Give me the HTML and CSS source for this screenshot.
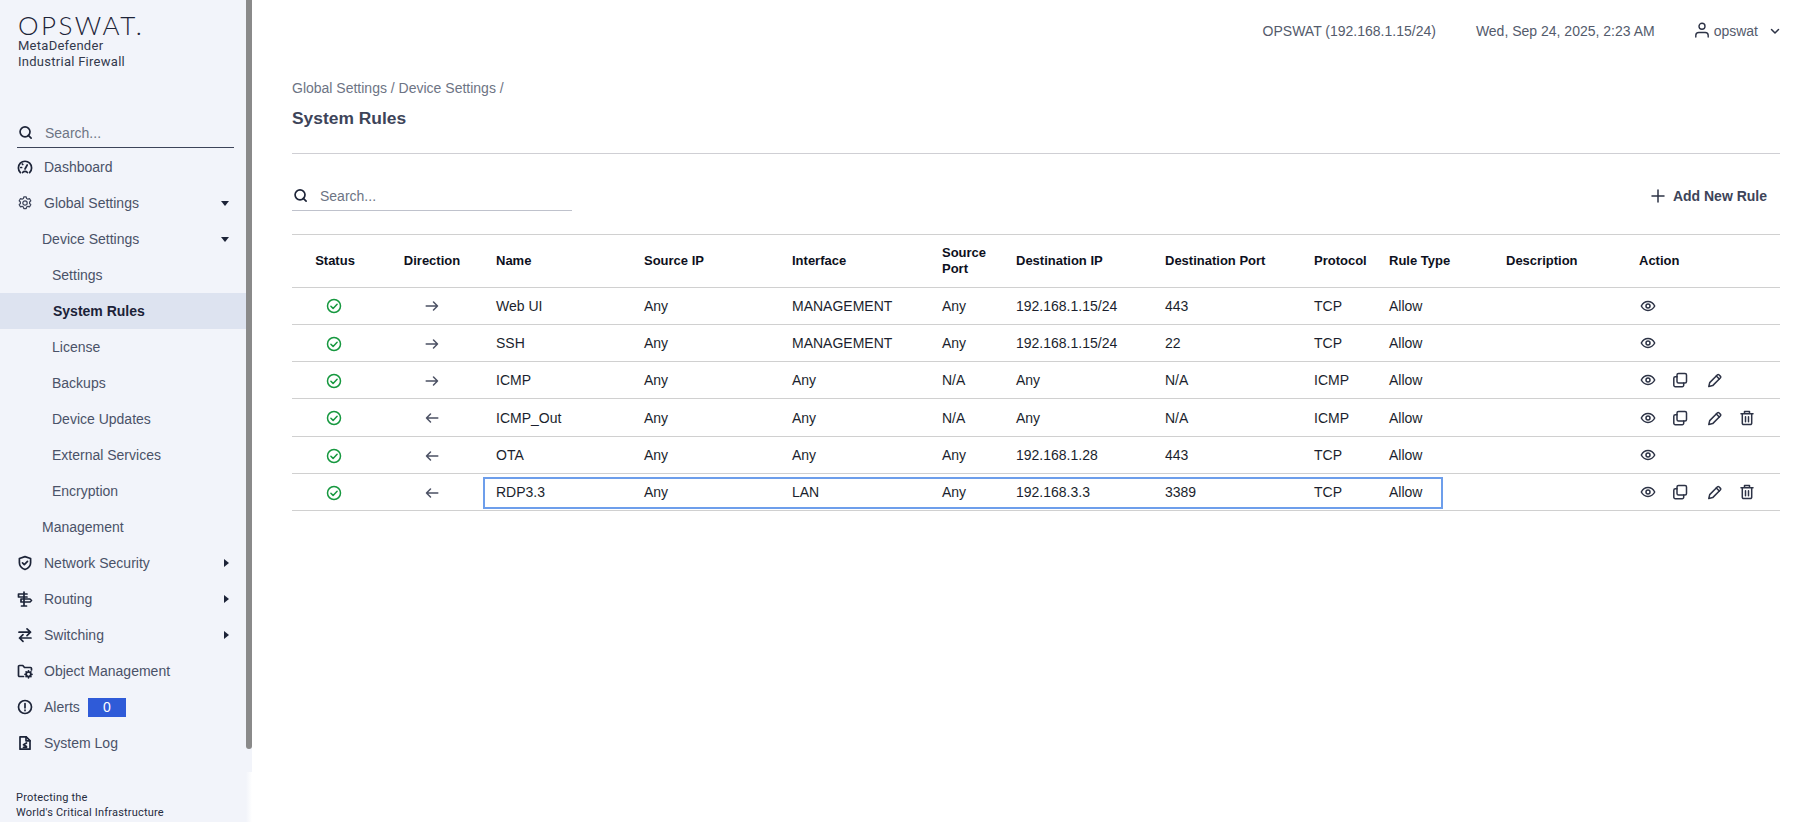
FILE: index.html
```html
<!DOCTYPE html>
<html lang="en">
<head>
<meta charset="utf-8">
<title>System Rules</title>
<link rel="stylesheet" href="styles.css">
</head>
<body>
<svg class="sprite" aria-hidden="true">
  <symbol id="i-search" viewBox="0 0 16 16"><circle cx="7.5" cy="7.3" r="5.3"/><path d="M11 11l3 3"/></symbol>
  <symbol id="i-gauge" viewBox="0 0 16 16"><path d="M3.4 13.600A6.600 6.600 0 1 1 12.600 13.600"/><path d="M5.600 13.500a3.200 3.200 0 0 1 4.800 0"/><path d="M8 10l2.200-4"/><path d="M3.800 8.500h.8M5.300 5l.5.5"/></symbol>
  <symbol id="i-gear" viewBox="0 0 16 16"><path d="M6.800 1.800h2.400l.4 1.700 1.300.7 1.700-.5 1.200 2.100-1.200 1.200v1.500l1.200 1.200-1.200 2.100-1.700-.5-1.300.7-.4 1.700H6.800l-.4-1.700-1.300-.7-1.700.5-1.200-2.100 1.200-1.200V7l-1.200-1.200 1.200-2.100 1.700.5 1.300-.7z"/><circle cx="8" cy="8" r="2.200"/></symbol>
  <symbol id="i-shield" viewBox="0 0 16 16"><path d="M8 1.600l5.600 1.900v4.200c0 3.200-2.300 5.500-5.600 6.800-3.300-1.300-5.600-3.600-5.600-6.800V3.500z"/><path d="M5.500 7.800l1.800 1.800 3.200-3.300"/></symbol>
  <symbol id="i-sign" viewBox="0 0 16 16"><path d="M7 1v14M4.500 15h5"/><path d="M1.500 3h8.500M1.500 6h8.500M1.500 3v3"/><path d="M4 8h9l1.500 1.500L13 11H4z"/></symbol>
  <symbol id="i-swap" viewBox="0 0 16 16"><path d="M2 5.200h11.500M10 1.800l3.500 3.400-3.500 3.400"/><path d="M14 11H2.500M6 7.600L2.500 11 6 14.400"/></symbol>
  <symbol id="i-folder" viewBox="0 0 16 16"><path d="M6.500 13.500h-4a1 1 0 0 1-1-1v-9a1 1 0 0 1 1-1h3.300l1.700 2h6a1 1 0 0 1 1 1v1.500"/><circle cx="11.500" cy="11.300" r="2.300"/><path d="M11.500 7.800v1M11.500 13.800v1M8 11.300h1M14 11.300h1M9.100 8.900l.6.6M13.300 13.100l.6.6M9.100 13.700l.6-.6M13.300 9.500l.6-.6"/></symbol>
  <symbol id="i-alert" viewBox="0 0 16 16"><circle cx="8" cy="8" r="6.500"/><path d="M8 4.500v4.300M8 11v.6"/></symbol>
  <symbol id="i-doc" viewBox="0 0 16 16"><path d="M3 1.800h6.200L13 5.600v8.600H3z"/><path d="M9 1.800v4h4"/><path d="M9.500 8L6.500 9.800l3 1.800M6.500 12.400h3"/></symbol>
  <symbol id="i-user" viewBox="0 0 16 16"><circle cx="8" cy="4.300" r="3"/><path d="M1.800 15v-1.500a3 3 0 0 1 3-3h6.400a3 3 0 0 1 3 3V15"/></symbol>
  <symbol id="i-chev" viewBox="0 0 12 12"><path d="M2.500 4.500L6 8l3.500-3.500"/></symbol>
  <symbol id="i-plus" viewBox="0 0 16 16"><path d="M8 2v12M2 8h12"/></symbol>
  <symbol id="i-check" viewBox="0 0 16 16"><circle cx="8" cy="8" r="6.500"/><path d="M4.900 8.200l2.200 2.200 4-4.200"/></symbol>
  <symbol id="i-right" viewBox="0 0 16 16"><path d="M2.200 8h11.300M9.500 4l4 4-4 4"/></symbol>
  <symbol id="i-left" viewBox="0 0 16 16"><path d="M13.800 8H2.500M6.500 4l-4 4 4 4"/></symbol>
  <symbol id="i-eye" viewBox="0 0 16 16"><path d="M1.300 8C2.800 5.100 5.200 3.600 8 3.600s5.200 1.500 6.700 4.400c-1.500 2.900-3.900 4.400-6.700 4.400S2.800 10.900 1.300 8z"/><circle cx="8" cy="8" r="2"/></symbol>
  <symbol id="i-copy" viewBox="0 0 16 16"><rect x="5" y="1.500" width="9.500" height="9.500" rx="1.500"/><path d="M5 4.800H3.300a1.500 1.500 0 0 0-1.500 1.500v6.900a1.500 1.500 0 0 0 1.500 1.500h6.900a1.500 1.500 0 0 0 1.500-1.500V11"/></symbol>
  <symbol id="i-pencil" viewBox="0 0 16 16"><path d="M1.800 14.500l.9-3.900 7.800-7.800a1 1 0 0 1 1.400 0l1.600 1.600a1 1 0 0 1 0 1.400l-7.800 7.800z"/><path d="M9.300 4l3 3"/></symbol>
  <symbol id="i-trash" viewBox="0 0 16 16"><path d="M2 3.800h12M5.500 3.800V1.600h5v2.200M3.300 3.800v9.400a1.300 1.300 0 0 0 1.300 1.300h6.800a1.300 1.300 0 0 0 1.300-1.300V3.800M6.500 6.800v5M9.500 6.800v5"/></symbol>
</svg>

<div class="app">
  <aside class="sidebar">
    <div class="brand">
      <div class="logo">OPSWAT.</div>
      <div class="product">MetaDefender<br>Industrial Firewall</div>
    </div>
    <label class="side-search">
      <svg class="ic ic-search"><use href="#i-search"/></svg>
      <input type="text" placeholder="Search...">
    </label>
    <nav class="nav">
      <a class="item"><svg class="ic"><use href="#i-gauge"/></svg><span>Dashboard</span></a>
      <a class="item"><svg class="ic ic-sm"><use href="#i-gear"/></svg><span>Global Settings</span><i class="caret down"></i></a>
      <a class="item sub"><span>Device Settings</span><i class="caret down"></i></a>
      <a class="item leaf"><span>Settings</span></a>
      <a class="item leaf active"><span>System Rules</span></a>
      <a class="item leaf"><span>License</span></a>
      <a class="item leaf"><span>Backups</span></a>
      <a class="item leaf"><span>Device Updates</span></a>
      <a class="item leaf"><span>External Services</span></a>
      <a class="item leaf"><span>Encryption</span></a>
      <a class="item sub"><span>Management</span></a>
      <a class="item"><svg class="ic"><use href="#i-shield"/></svg><span>Network Security</span><i class="caret right"></i></a>
      <a class="item"><svg class="ic"><use href="#i-sign"/></svg><span>Routing</span><i class="caret right"></i></a>
      <a class="item"><svg class="ic"><use href="#i-swap"/></svg><span>Switching</span><i class="caret right"></i></a>
      <a class="item"><svg class="ic"><use href="#i-folder"/></svg><span>Object Management</span></a>
      <a class="item"><svg class="ic"><use href="#i-alert"/></svg><span>Alerts</span><b class="badge">0</b></a>
      <a class="item"><svg class="ic"><use href="#i-doc"/></svg><span>System Log</span></a>
    </nav>
    <div class="tagline">Protecting the<br>World's Critical Infrastructure</div>
    <div class="thumb"></div>
    <div class="rail-fade"></div>
  </aside>

  <main class="main">
    <header class="topbar">
      <span class="host">OPSWAT (192.168.1.15/24)</span>
      <span class="date">Wed, Sep 24, 2025, 2:23 AM</span>
      <span class="user"><svg class="ic-user"><use href="#i-user"/></svg>opswat</span>
      <svg class="ic-chev"><use href="#i-chev"/></svg>
    </header>

    <div class="crumbs">Global Settings / Device Settings /</div>
    <h1 class="title">System Rules</h1>

    <div class="toolbar">
      <label class="search">
        <svg class="ic ic-search"><use href="#i-search"/></svg>
        <input type="text" placeholder="Search...">
      </label>
      <button class="add" type="button"><svg class="ic-plus"><use href="#i-plus"/></svg>Add New Rule</button>
    </div>

    <table class="rules">
      <colgroup>
        <col class="c-status"><col class="c-dir"><col class="c-name"><col class="c-sip"><col class="c-if"><col class="c-sport"><col class="c-dip"><col class="c-dport"><col class="c-proto"><col class="c-type"><col class="c-desc"><col class="c-act">
      </colgroup>
      <thead>
        <tr><th class="ctr">Status</th><th class="ctr dirh">Direction</th><th>Name</th><th>Source IP</th><th>Interface</th><th>Source Port</th><th>Destination IP</th><th>Destination Port</th><th>Protocol</th><th>Rule Type</th><th>Description</th><th>Action</th></tr>
      </thead>
      <tbody>
        <tr>
          <td class="ctr"><svg class="st"><use href="#i-check"/></svg></td><td class="ctr dirh"><svg class="dir"><use href="#i-right"/></svg></td>
          <td>Web UI</td><td>Any</td><td>MANAGEMENT</td><td>Any</td><td>192.168.1.15/24</td><td>443</td><td>TCP</td><td>Allow</td><td></td>
          <td class="acts"><span class="act"><svg><use href="#i-eye"/></svg></span></td>
        </tr>
        <tr>
          <td class="ctr"><svg class="st"><use href="#i-check"/></svg></td><td class="ctr dirh"><svg class="dir"><use href="#i-right"/></svg></td>
          <td>SSH</td><td>Any</td><td>MANAGEMENT</td><td>Any</td><td>192.168.1.15/24</td><td>22</td><td>TCP</td><td>Allow</td><td></td>
          <td class="acts"><span class="act"><svg><use href="#i-eye"/></svg></span></td>
        </tr>
        <tr>
          <td class="ctr"><svg class="st"><use href="#i-check"/></svg></td><td class="ctr dirh"><svg class="dir"><use href="#i-right"/></svg></td>
          <td>ICMP</td><td>Any</td><td>Any</td><td>N/A</td><td>Any</td><td>N/A</td><td>ICMP</td><td>Allow</td><td></td>
          <td class="acts"><span class="act"><svg><use href="#i-eye"/></svg></span><span class="act"><svg><use href="#i-copy"/></svg></span><span class="act"><svg><use href="#i-pencil"/></svg></span></td>
        </tr>
        <tr>
          <td class="ctr"><svg class="st"><use href="#i-check"/></svg></td><td class="ctr dirh"><svg class="dir"><use href="#i-left"/></svg></td>
          <td>ICMP_Out</td><td>Any</td><td>Any</td><td>N/A</td><td>Any</td><td>N/A</td><td>ICMP</td><td>Allow</td><td></td>
          <td class="acts"><span class="act"><svg><use href="#i-eye"/></svg></span><span class="act"><svg><use href="#i-copy"/></svg></span><span class="act"><svg><use href="#i-pencil"/></svg></span><span class="act"><svg><use href="#i-trash"/></svg></span></td>
        </tr>
        <tr>
          <td class="ctr"><svg class="st"><use href="#i-check"/></svg></td><td class="ctr dirh"><svg class="dir"><use href="#i-left"/></svg></td>
          <td>OTA</td><td>Any</td><td>Any</td><td>Any</td><td>192.168.1.28</td><td>443</td><td>TCP</td><td>Allow</td><td></td>
          <td class="acts"><span class="act"><svg><use href="#i-eye"/></svg></span></td>
        </tr>
        <tr>
          <td class="ctr"><svg class="st"><use href="#i-check"/></svg></td><td class="ctr dirh"><svg class="dir"><use href="#i-left"/></svg></td>
          <td class="focus-cell"><span class="focus-ring"></span>RDP3.3</td><td>Any</td><td>LAN</td><td>Any</td><td>192.168.3.3</td><td>3389</td><td>TCP</td><td>Allow</td><td></td>
          <td class="acts"><span class="act"><svg><use href="#i-eye"/></svg></span><span class="act"><svg><use href="#i-copy"/></svg></span><span class="act"><svg><use href="#i-pencil"/></svg></span><span class="act"><svg><use href="#i-trash"/></svg></span></td>
        </tr>
      </tbody>
    </table>
  </main>
</div>
</body>
</html>
```

FILE: styles.css
```css
* { box-sizing: border-box; }
html, body { margin: 0; padding: 0; height: 100%; overflow: hidden; background: #fff; }
body { font-family: "Liberation Sans", Arial, sans-serif; font-size: 14px; color: #1b1f2e; }
.sprite { display: none; }
svg { fill: none; stroke: currentColor; stroke-width: 1.5; stroke-linecap: round; stroke-linejoin: round; }

.app { display: flex; height: 822px; }

/* Sidebar */
.sidebar { position: relative; flex: 0 0 252px; width: 252px; height: 822px; background: #f2f4fa; padding-right: 6px; display: flex; flex-direction: column; }
.brand { padding: 14px 0 0 18px; height: 118px; }
.logo { font-family: Lato, "Liberation Sans", sans-serif; font-weight: 300; font-size: 26px; line-height: 22px; letter-spacing: 2.4px; color: #1d2438; }
.product { font-family: Roboto, "Liberation Sans", sans-serif; font-size: 13px; line-height: 16px; color: #33394c; margin-top: 2px; letter-spacing: 0.27px; }

.side-search { display: flex; align-items: center; margin: 0 17px; width: 217px; height: 30px; border-bottom: 1px solid #3d4459; padding-left: 1px; }
.side-search input, .search input { border: 0; outline: 0; background: transparent; font: 14px "Liberation Sans", Arial, sans-serif; padding: 0; width: 100%; color: #1b1f2e; }
.side-search input::placeholder, .search input::placeholder { color: #6d7484; opacity: 1; }
.ic { width: 16px; height: 16px; flex: none; color: #1d2438; stroke-width: 1.7; }
.ic-search { width: 15px; height: 15px; margin-right: 12px; stroke-width: 1.8; }
.ic-sm { color: #3d4459; stroke-width: 1.2; }

.nav { display: flex; flex-direction: column; margin-top: 1px; }
.item { display: flex; align-items: center; height: 36px; padding-left: 17px; color: #4a5268; white-space: nowrap; }
.item .ic { margin-right: 11px; }
.item.sub { padding-left: 42px; }
.item.leaf { padding-left: 52px; }
.item.active { background: #dde3f0; color: #1b2238; font-weight: 700; padding-left: 53px; }
.caret { width: 0; height: 0; margin-left: auto; border-style: solid; border-color: transparent; }
.caret.down { margin-right: 17px; border-width: 5px 4px 0 4px; border-top-color: #1d2438; }
.caret.right { margin-right: 17px; border-width: 4px 0 4px 5px; border-left-color: #1d2438; }
.badge { width: 38px; height: 19px; margin-left: 8px; background: #2f5bd8; color: #fff; font-weight: 400; font-size: 14px; line-height: 19px; text-align: center; }

.tagline { font-family: Roboto, "Liberation Sans", sans-serif; font-size: 11px; line-height: 15px; color: #262c3e; margin: auto 0 0 16px; padding-bottom: 2px; letter-spacing: 0.2px; }
.thumb { position: absolute; top: 0; left: 246px; width: 6px; height: 749px; background: #8a8a8a; border-radius: 0 0 3px 3px; }
.rail-fade { position: absolute; top: 772px; bottom: 0; left: 246px; width: 6px; background: linear-gradient(to right, #f2f4fa, #fff); }

/* Main */
.main { flex: 1; min-width: 0; padding: 0 21px 0 40px; display: flex; flex-direction: column; }
.topbar { display: flex; align-items: center; justify-content: flex-end; height: 62px; color: #545b6c; }
.host { margin-right: 40px; }
.date { margin-right: 39px; }
.user { display: flex; align-items: center; margin-right: 11px; }
.ic-user { width: 16px; height: 16px; margin-right: 4px; color: #2d3346; margin-top: -2px; stroke-width: 1.4; }
.ic-chev { width: 12px; height: 12px; color: #2d3346; margin-right: -1px; }

.crumbs { color: #6d7484; line-height: 16px; margin-top: 18px; }
.title { font-size: 17.4px; font-weight: 700; line-height: 20px; margin: 12px 0 0; color: #3d4459; padding-bottom: 25px; border-bottom: 1px solid #cfcfd4; }

.toolbar { display: flex; align-items: center; justify-content: space-between; height: 81px; border-bottom: 1px solid #d0d0d0; }
.search { display: flex; align-items: center; width: 280px; height: 30px; border-bottom: 1px solid #bfc2cc; margin-top: 4px; padding-left: 1px; }
.add { display: flex; align-items: center; border: 0; background: none; padding: 0; margin: 4px 13px 0 0; font: 700 14px "Liberation Sans", Arial, sans-serif; color: #3d4459; }
.ic-plus { width: 16px; height: 16px; margin-right: 7px; color: #2d3346; }

/* Table */
.rules { width: 100%; table-layout: fixed; border-collapse: collapse; }
.c-status { width: 86px; } .c-dir { width: 106px; } .c-name { width: 148px; } .c-sip { width: 148px; }
.c-if { width: 150px; } .c-sport { width: 74px; } .c-dip { width: 149px; } .c-dport { width: 149px; }
.c-proto { width: 75px; } .c-type { width: 117px; } .c-desc { width: 133px; } .c-act { width: 153px; }
.rules th { height: 52px; font-size: 13px; font-weight: 700; text-align: left; padding: 0 0 0 12px; line-height: 16px; color: #0d1020; border-bottom: 1px solid #d0d0d0; }
.rules td { height: 37.33px; padding: 0 0 0 12px; color: #1b1f2e; border-bottom: 1px solid #d0d0d0; }
.rules .ctr { text-align: center; padding-left: 0; }
.rules .dirh { padding-left: 2px; }
.st { width: 16px; height: 16px; color: #16983f; vertical-align: middle; margin-left: -2px; }
.dir { width: 16px; height: 16px; color: #4b5063; vertical-align: middle; }
.rules .acts { padding-left: 5px; white-space: nowrap; font-size: 0; }
.act { display: inline-block; width: 32px; text-align: center; }
.act:nth-child(3) { margin-left: 3px; }
.act svg { width: 16px; height: 16px; color: #2d3346; vertical-align: middle; stroke-width: 1.5; }
.focus-cell { position: relative; }
.focus-ring { position: absolute; left: -1px; top: 3px; width: 960px; height: 32px; border: 2px solid #6d9eeb; pointer-events: none; }
```
